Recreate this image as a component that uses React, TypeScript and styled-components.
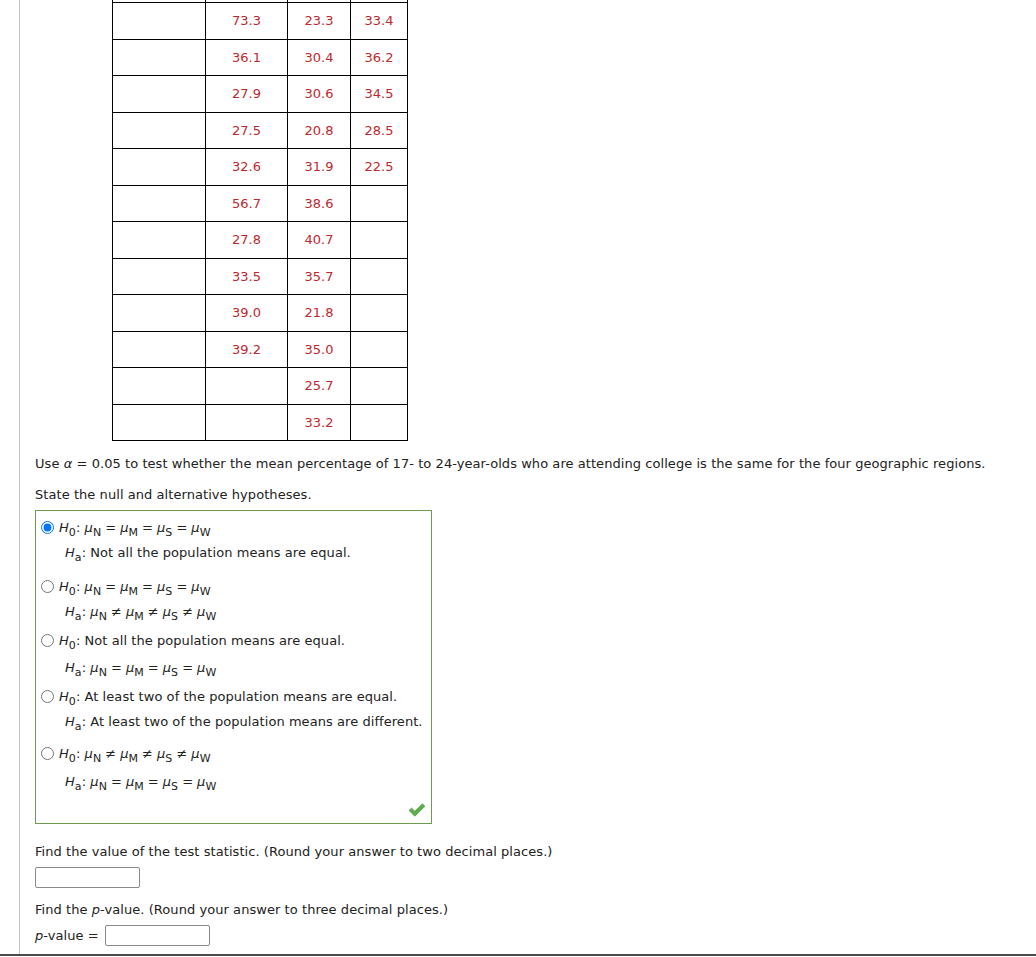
import styled, { createGlobalStyle } from 'styled-components';

const GlobalStyle = createGlobalStyle`
  html, body {
    margin: 0;
    padding: 0;
    background: #fff;
  }
  body {
    font-family: 'DejaVu Sans', Verdana, sans-serif;
    font-size: 13px;
    letter-spacing: 0.06px;
    color: #222;
  }
`;

const Page = styled.div`
  border-bottom: 2px solid #4a4a4a;
  overflow: hidden;
`;

const Content = styled.div`
  margin-left: 19px;
  border-left: 1px solid #c6c6c6;
  padding: 0 0 8px 15px;
`;

const DataTable = styled.table`
  border-collapse: collapse;
  table-layout: fixed;
  margin: -34.4px 0 0 77px;
`;

const Cell = styled.td<{ $w: number }>`
  width: ${(p) => p.$w}px;
  height: 36.5px;
  box-sizing: border-box;
  padding: 0;
  border: 1px solid #000;
  text-align: center;
  vertical-align: middle;
  color: #c1272d;
  font-size: 13px;
`;

const Paragraph = styled.p<{ $top: number }>`
  margin: ${(p) => p.$top}px 0 0;
  line-height: 20px;
`;

const AnswerBox = styled.div`
  position: relative;
  width: 397px;
  box-sizing: border-box;
  margin-top: 5px;
  border: 1px solid #6e9b4e;
  padding: 0 8px 29px 5px;
`;

const Option = styled.label<{ $top: number }>`
  display: flex;
  align-items: flex-start;
  gap: 5px;
  margin-top: ${(p) => p.$top}px;
`;

const Radio = styled.input`
  width: 13px;
  height: 13px;
  margin: 6px 0 0;
  flex: none;
`;

const Lines = styled.div`
  display: flex;
  flex-direction: column;
`;

const Line = styled.div<{ $indent?: number; $top?: number }>`
  line-height: 25px;
  white-space: nowrap;
  padding-left: ${(p) => p.$indent ?? 0}px;
  margin-top: ${(p) => p.$top ?? 0}px;
`;

const Var = styled.i`
  font-style: italic;
`;

const Sub = styled.sub`
  font-size: 11px;
  line-height: 1;
  vertical-align: -4px;
`;

const Op = styled.span`
  padding: 0 4px;
`;

const CheckMark = styled.svg`
  position: absolute;
  right: 5px;
  bottom: 6px;
`;

const NumberInput = styled.input`
  width: 105px;
  height: 21px;
  box-sizing: border-box;
  border: 1px solid #8a8a8a;
  border-radius: 2px;
  padding: 0 4px;
  font: inherit;
  display: block;
`;

const InlineRow = styled.div`
  display: flex;
  align-items: center;
  gap: 6px;
  margin-top: 5px;
  line-height: 21px;
`;

const widths = [93, 82, 63, 57];

const rows: string[][] = [
  ['', '', '', ''],
  ['', '73.3', '23.3', '33.4'],
  ['', '36.1', '30.4', '36.2'],
  ['', '27.9', '30.6', '34.5'],
  ['', '27.5', '20.8', '28.5'],
  ['', '32.6', '31.9', '22.5'],
  ['', '56.7', '38.6', ''],
  ['', '27.8', '40.7', ''],
  ['', '33.5', '35.7', ''],
  ['', '39.0', '21.8', ''],
  ['', '39.2', '35.0', ''],
  ['', '', '25.7', ''],
  ['', '', '33.2', ''],
];

const MuChain = ({ op }: { op: string }) => (
  <>
    {['N', 'M', 'S', 'W'].map((r, i) => (
      <span key={r}>
        {i > 0 && <Op>{op}</Op>}
        <Var>μ</Var>
        <Sub>{r}</Sub>
      </span>
    ))}
  </>
);

const Hyp = ({ label, children }: { label: string; children: React.ReactNode }) => (
  <>
    <Var>H</Var>
    <Sub>{label}</Sub>: {children}
  </>
);

const notAll = 'Not all the population means are equal.';

const options = [
  { top: 4, spread: 0, checked: true, h0: <MuChain op="=" />, ha: notAll },
  { top: 9, spread: 0, h0: <MuChain op="=" />, ha: <MuChain op="≠" /> },
  { top: 4, spread: 2, h0: notAll, ha: <MuChain op="=" /> },
  {
    top: 4,
    spread: 0,
    h0: 'At least two of the population means are equal.',
    ha: 'At least two of the population means are different.',
  },
  { top: 7, spread: 3, h0: <MuChain op="≠" />, ha: <MuChain op="=" /> },
];

export default function App() {
  return (
    <Page>
      <GlobalStyle />
      <Content>
        <DataTable>
          <tbody>
            {rows.map((row, r) => (
              <tr key={r}>
                {row.map((v, c) => (
                  <Cell key={c} $w={widths[c]}>
                    {v}
                  </Cell>
                ))}
              </tr>
            ))}
          </tbody>
        </DataTable>

        <Paragraph $top={13}>
          Use <Var>α</Var> = 0.05 to test whether the mean percentage of 17- to 24-year-olds who are
          attending college is the same for the four geographic regions.
        </Paragraph>
        <Paragraph $top={11}>State the null and alternative hypotheses.</Paragraph>

        <AnswerBox>
          {options.map((o, i) => (
            <Option key={i} $top={o.top}>
              <Radio type="radio" name="hyp" defaultChecked={o.checked} />
              <Lines>
                <Line>
                  <Hyp label="0">{o.h0}</Hyp>
                </Line>
                <Line $indent={6} $top={o.spread}>
                  <Hyp label="a">{o.ha}</Hyp>
                </Line>
              </Lines>
            </Option>
          ))}
          <CheckMark width="18" height="14" viewBox="0 0 18 14">
            <path
              d="M1 7.5 L3.6 5 L6.8 8.2 L14.4 0.8 L17 3.3 L6.8 13.2 Z"
              fill="#5cae4a"
              stroke="#4a9a3a"
              strokeWidth="0.6"
              strokeLinejoin="round"
            />
          </CheckMark>
        </AnswerBox>

        <Paragraph $top={18}>
          Find the value of the test statistic. (Round your answer to two decimal places.)
        </Paragraph>
        <InlineRow>
          <NumberInput type="text" />
        </InlineRow>

        <Paragraph $top={12}>
          Find the <Var>p</Var>-value. (Round your answer to three decimal places.)
        </Paragraph>
        <InlineRow>
          <span>
            <Var>p</Var>-value =
          </span>
          <NumberInput type="text" />
        </InlineRow>
      </Content>
    </Page>
  );
}
